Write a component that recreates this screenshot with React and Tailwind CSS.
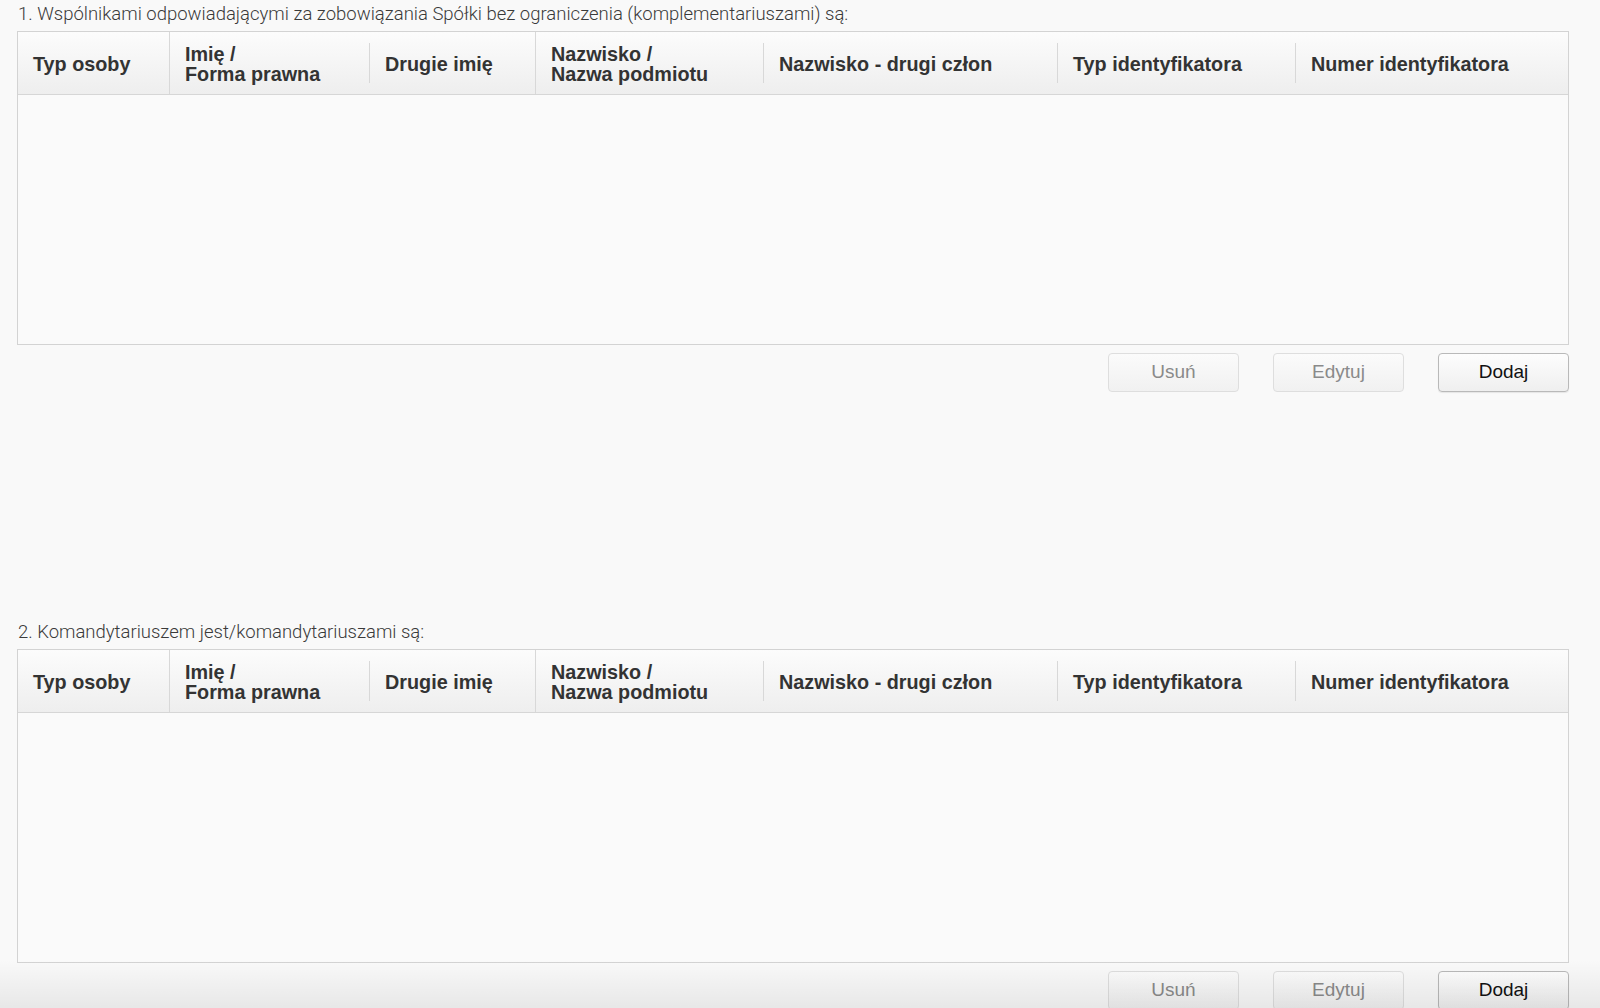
const columns = [
  { w: "w-[152px]", lines: ["Typ osoby"], full: true },
  { w: "w-[200px]", lines: ["Imię /", "Forma prawna"], full: false },
  { w: "w-[166px]", lines: ["Drugie imię"], full: true },
  { w: "w-[228px]", lines: ["Nazwisko /", "Nazwa podmiotu"], full: false },
  { w: "w-[294px]", lines: ["Nazwisko - drugi człon"], full: false },
  { w: "w-[238px]", lines: ["Typ identyfikatora"], full: false },
  { w: "flex-1", lines: ["Numer identyfikatora"], full: false, last: true },
];

const PartnerTable = () => (
  <div className="border border-[#d3d3d3] bg-[#fafafa]">
    <div className="flex h-[63px] border-b border-[#d6d6d6] bg-gradient-to-b from-[#fcfcfc] to-[#eeeeee]">
      {columns.map((col, i) => (
        <div key={i} className={`${col.w} relative flex items-center pl-[15px] pt-[2px]`}>
          <div className="text-[19.8px] leading-[20px] font-bold text-[#333] font-['Liberation_Sans',Arial,sans-serif]">
            {col.lines.map((l) => (
              <div key={l}>{l}</div>
            ))}
          </div>
          {!col.last &&
            (col.full ? (
              <div className="absolute right-0 top-0 bottom-0 w-px bg-[#d8d8d8]"></div>
            ) : (
              <div className="absolute right-0 top-[11px] bottom-[11px] w-px bg-[#d8d8d8]"></div>
            ))}
        </div>
      ))}
    </div>
    <div className="h-[249px]"></div>
  </div>
);

const Buttons = () => (
  <div className="flex justify-end gap-[34px] mt-[8px] font-['Liberation_Sans',Arial,sans-serif] text-[19px]">
    <button className="w-[131px] h-[39px] rounded-[4px] border border-[#dedede] bg-gradient-to-b from-[#fbfbfb] to-[#f1f1f1] text-[#8a8a8a]">
      Usuń
    </button>
    <button className="w-[131px] h-[39px] rounded-[4px] border border-[#dedede] bg-gradient-to-b from-[#fbfbfb] to-[#f1f1f1] text-[#8a8a8a]">
      Edytuj
    </button>
    <button className="w-[131px] h-[39px] rounded-[4px] border border-[#b9b9b9] bg-gradient-to-b from-[#fdfdfd] to-[#efefef] text-[#111] shadow-[0_1px_1px_rgba(0,0,0,0.08)]">
      Dodaj
    </button>
  </div>
);

const Section = ({ title }) => (
  <div>
    <div className="text-[18.5px] leading-[24px] font-light text-[#3a3a3a] font-['Roboto','Liberation_Sans',sans-serif] mb-[5px] pl-px">
      {title}
    </div>
    <PartnerTable />
    <Buttons />
  </div>
);

export default function App() {
  return (
    <div className="relative h-screen overflow-hidden bg-[#f9f9f9]">
      <div className="pl-[17px] pr-[31px] pt-[2px] flex flex-col gap-[228px]">
        <Section title="1. Wspólnikami odpowiadającymi za zobowiązania Spółki bez ograniczenia (komplementariuszami) są:" />
        <Section title="2. Komandytariuszem jest/komandytariuszami są:" />
      </div>
      <div className="pointer-events-none absolute left-0 right-0 bottom-0 h-[48px] bg-gradient-to-b from-transparent to-[rgba(0,0,0,0.07)]"></div>
    </div>
  );
}
